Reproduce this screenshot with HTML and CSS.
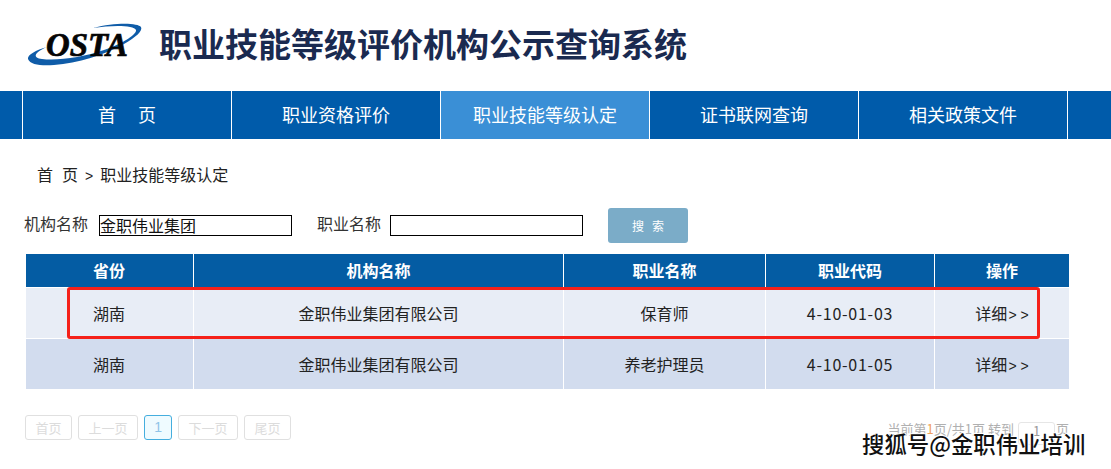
FILE: index.html
```html
<!DOCTYPE html>
<html lang="zh">
<head>
<meta charset="utf-8">
<title>职业技能等级评价机构公示查询系统</title>
<link rel="stylesheet" href="styles.css">
</head>
<body>
<header class="top">
  <svg class="logo" width="118" height="46" viewBox="26 22 118 46">
    <path d="M47 47 C36 50 27 55 28 59 C30 65 42 66 54 65 C78 63 104 55 124 44 C136 37 143 31 141 27 C138 23 116 22 93 28 C112 25 134 25 136 30 C137 34 124 43 104 50 C84 57 58 61 42 59 C33 58 33 53 47 47 Z" fill="#0f5ca8"/>
    <text x="46" y="56" class="logo-text" textLength="82" lengthAdjust="spacingAndGlyphs">OSTA</text>
  </svg>
  <h1 class="title">职业技能等级评价机构公示查询系统</h1>
</header>
<nav class="nav">
  <a class="nav-item">首<span class="nav-gap"></span>页</a>
  <a class="nav-item">职业资格评价</a>
  <a class="nav-item active">职业技能等级认定</a>
  <a class="nav-item">证书联网查询</a>
  <a class="nav-item last">相关政策文件</a>
</nav>
<div class="crumb">首<span class="crumb-gap"></span>页<span class="gt">&gt;</span>职业技能等级认定</div>
<form class="search">
  <label class="lbl first">机构名称</label>
  <input class="field" type="text" value="金职伟业集团">
  <label class="lbl second">职业名称</label>
  <input class="field" type="text">
  <button class="go" type="button">搜&nbsp;&nbsp;&nbsp;索</button>
</form>
<table class="grid">
  <colgroup><col class="c1"><col class="c2"><col class="c3"><col class="c4"><col class="c5"></colgroup>
  <thead><tr><th>省份</th><th>机构名称</th><th>职业名称</th><th>职业代码</th><th>操作</th></tr></thead>
  <tbody>
    <tr class="odd"><td>湖南</td><td>金职伟业集团有限公司</td><td>保育师</td><td class="code">4-10-01-03</td><td>详细<span class="gts">&gt; &gt;</span></td></tr>
    <tr class="even"><td>湖南</td><td>金职伟业集团有限公司</td><td>养老护理员</td><td class="code">4-10-01-05</td><td>详细<span class="gts">&gt; &gt;</span></td></tr>
  </tbody>
</table>
<div class="pager">
  <div class="pages">
    <span class="pg">首页</span><span class="pg">上一页</span><span class="pg cur">1</span><span class="pg">下一页</span><span class="pg">尾页</span>
  </div>
  <div class="info"><span class="info-text">当前第<b class="hl">1</b>页/共1页 转到</span><span class="jump">1</span><span class="info-text">页</span></div>
</div>
<div class="redbox"></div>
<div class="mark">搜狐号@金职伟业培训</div>
</body>
</html>
```
FILE: styles.css
```css
* { box-sizing: border-box; }
html, body { margin: 0; padding: 0; }
body {
  width: 1111px;
  height: 469px;
  overflow: hidden;
  position: relative;
  background: #fff;
  color: #222;
  font-family: "Noto Sans CJK SC", "Liberation Sans", sans-serif;
}
.top {
  height: 91px;
  display: flex;
  align-items: flex-start;
  padding: 0 0 0 26px;
}
.logo { display: block; margin-top: 22px; flex: none; }
.logo-text {
  font-family: "Liberation Serif", serif;
  font-style: italic;
  font-weight: 700;
  font-size: 33px;
  fill: #050505;
  stroke: #050505;
  stroke-width: 0.7px;
}
.title {
  margin: 19px 0 0 15px;
  font-size: 33px;
  line-height: 48px;
  font-weight: 700;
  color: #1a2a50;
  white-space: nowrap;
}
.nav {
  height: 48px;
  background: #005baa;
  display: flex;
  padding-left: 22px;
}
.nav-item {
  width: 209px;
  height: 48px;
  border-left: 1px solid #fff;
  color: #fff;
  font-size: 18px;
  line-height: 47px;
  text-align: center;
}
.nav-gap { display: inline-block; width: 22px; }
.nav-item.active { background: #3a8fd6; }
.nav-item.last { width: 210px; border-right: 1px solid #fff; }
.crumb {
  margin: 24px 0 0 37px;
  font-size: 16px;
  line-height: 22px;
  height: 22px;
  color: #222;
}
.crumb-gap { display: inline-block; width: 9px; }
.gt { font-size: 14px; font-family: "Liberation Sans", sans-serif; margin: 0 7px; }
.search {
  display: flex;
  align-items: flex-start;
  margin: 23px 0 0 24px;
  height: 46px;
}
.lbl { font-size: 16px; line-height: 20px; margin-top: 5px; color: #333; white-space: nowrap; }
.lbl.first { margin-right: 2px; }
.lbl.second { margin-left: 25px; }
.field {
  width: 193px;
  height: 21px;
  margin: 7px 0 0 9px;
  padding: 0 0 2px 0;
  border: 1px solid #000;
  border-radius: 0;
  background: #fff;
  color: #111;
  font: 16px/19px "Noto Sans CJK SC", sans-serif;
  outline: 0;
}
.go {
  width: 80px;
  height: 35px;
  margin: 0 0 0 25px;
  padding: 0;
  border: 0;
  border-radius: 3px;
  background: #7bacc8;
  color: #fff;
  font: 12px/35px "Noto Sans CJK SC", sans-serif;
}
.grid {
  margin: 0 0 0 26px;
  width: 1043px;
  height: 135px;
  border-collapse: separate;
  border-spacing: 0;
  table-layout: fixed;
}
.c1 { width: 167px; }
.c2 { width: 370px; }
.c3 { width: 202px; }
.c4 { width: 169px; }
.c5 { width: 135px; }
.grid th {
  height: 34px;
  padding: 0;
  background: #045ca3;
  color: #fff;
  font-size: 16px;
  font-weight: 700;
  line-height: 33px;
  border-left: 1px solid #fff;
  border-bottom: 1px solid #fff;
}
.grid td {
  height: 51px;
  padding: 0;
  text-align: center;
  font-size: 16px;
  color: #222;
  border-left: 1px solid #fff;
  border-bottom: 1px solid #fff;
}
.grid th:first-child, .grid td:first-child { border-left: 0; padding-right: 1px; }
.grid tr:last-child td { border-bottom: 0; height: 50px; }
.odd td { background: #e8edf6; }
.even td { background: #d2dcee; }
.grid .code { letter-spacing: 0.75px; }
.gts { font-family: "Liberation Sans", sans-serif; font-size: 14px; margin-left: 1px; }
.pager {
  display: flex;
  justify-content: space-between;
  align-items: flex-start;
  margin-top: 26px;
  padding: 0 42px 0 25px;
}
.pages { display: flex; gap: 6px; }
.pg {
  height: 25px;
  padding: 0 9.5px;
  border: 1px solid #e0e0e0;
  border-radius: 3px;
  color: #dcdcdc;
  font-size: 13px;
  line-height: 23px;
}
.pg.cur {
  width: 28px;
  padding: 0;
  text-align: center;
  border-color: #45aede;
  background: #effbff;
  color: #8fc4e8;
  font-size: 14px;
  font-family: "Liberation Sans", sans-serif;
}
.info {
  display: flex;
  align-items: flex-start;
  font-size: 13px;
  color: #b0b0b0;
  white-space: pre;
}
.info-text { margin-top: 6px; line-height: 16px; }
.hl { font-weight: 400; color: #f0a060; }
.jump {
  width: 37px;
  height: 23px;
  margin: 7px 1px 0 4px;
  border: 1px solid #e6e6e6;
  border-radius: 3px;
  text-align: center;
  line-height: 16px;
  color: #999;
}
.redbox {
  position: absolute;
  left: 67px;
  top: 287px;
  width: 973px;
  height: 52px;
  border: 3px solid #f5211a;
  border-radius: 3px;
}
.mark {
  position: absolute;
  left: 862px;
  top: 428px;
  font-size: 22.4px;
  font-weight: 500;
  line-height: 30px;
  color: #111;
  white-space: nowrap;
  text-shadow: 1px 0 0 #fff, -1px 0 0 #fff, 0 1px 0 #fff, 0 -1px 0 #fff;
}
```
